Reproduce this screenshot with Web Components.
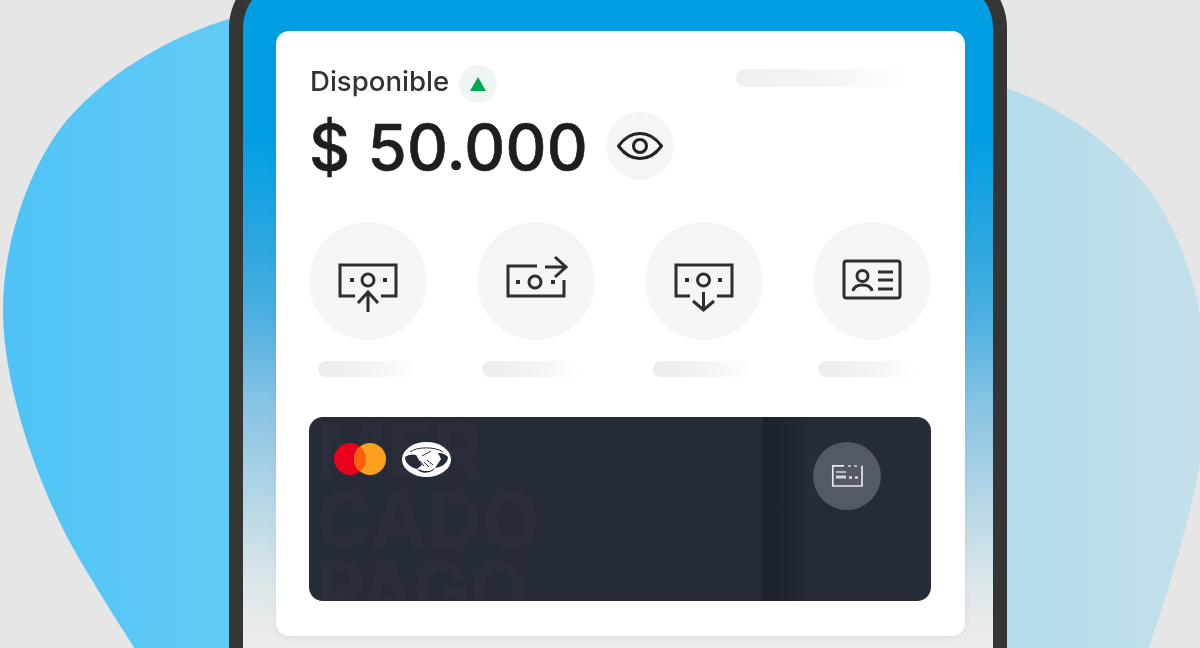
<!DOCTYPE html>
<html><head><meta charset="utf-8"><style>html,body{margin:0;padding:0}body{width:1200px;height:648px;overflow:hidden;background:#e6e6e6}</style></head>
<body>
<wallet-scene>
  <phone-frame>
    <wallet-card>
      <balance-head slot="head" label="Disponible" amount="$ 50.000"></balance-head>
      <action-row slot="actions">
        <action-item kind="up" style="--o:9px"></action-item>
        <action-item kind="send" style="--o:5px"></action-item>
        <action-item kind="down" style="--o:8px"></action-item>
        <action-item kind="id" style="--o:5px"></action-item>
      </action-row>
      <debit-card slot="card"></debit-card>
    </wallet-card>
  </phone-frame>
</wallet-scene>
<script>
function def(name, html, init){
  customElements.define(name, class extends HTMLElement{
    constructor(){super();this.attachShadow({mode:'open'}).innerHTML=html;}
    connectedCallback(){if(init)init(this,this.shadowRoot);}
  });
}
def('wallet-scene',`<style>
:host{display:block;position:relative;width:1200px;height:648px;overflow:hidden;background:#e6e6e6;font-family:Inter,"Open Sans",sans-serif}
svg{position:absolute;left:0;top:0}
.stage{position:relative;display:flex;padding-left:229px;filter:blur(.5px)}
</style>
<svg width="1200" height="648" viewBox="0 0 1200 648"><defs>
<linearGradient id="a" x1="0" x2="1" y1="0" y2="0"><stop offset="0" stop-color="#4fc3f6"/><stop offset="1" stop-color="#63ccf5"/></linearGradient>
<linearGradient id="b" x1="0" x2="1" y1="0" y2="0"><stop offset="0" stop-color="#b2dcec"/><stop offset="1" stop-color="#c4e0ea"/></linearGradient></defs>
<path fill="url(#a)" d="M240 16C185 30 115 65 67 120C30 165 3 240 3 310C3 370 25 455 67 537C85 570 110 610 142 660H240Z"/>
<path fill="url(#b)" d="M1000 86C1060 105 1115 145 1150 191C1185 240 1207 310 1207 390C1207 470 1175 570 1145 660H1000Z"/>
</svg>
<div class="stage"><slot></slot></div>`);
def('phone-frame',`<style>
:host{display:block;flex:none;width:778px;height:720px;margin-top:-34px;box-sizing:border-box;border:14px solid #353535;border-bottom:0;border-radius:62px 62px 0 0;
background:linear-gradient(180deg,#009ee3 0,#009ee3 150px,#2ea7df 270px,#4fb0e0 340px,#85c3e4 420px,#b5d6e6 520px,#dbe6ea 600px,#ececec 660px);padding:51px 28px 0 33px}
</style><slot></slot>`);
def('wallet-card',`<style>
:host{display:flex;flex-direction:column;width:689px;height:605px;box-sizing:border-box;background:#fff;border-radius:13px;padding:31px 34px 35px 33px;box-shadow:0 3px 8px rgba(0,0,0,.05)}
::slotted([slot=actions]){margin-top:42px}
::slotted([slot=card]){margin-top:auto}
</style><slot name="head"></slot><slot name="actions"></slot><slot name="card"></slot>`);
def('balance-head',`<style>
:host{display:flex;flex-direction:column;position:relative;color:#222}
.top{display:flex;align-items:center;gap:10px;height:44px}
.label{font-size:27.6px;font-weight:500;color:#333;position:relative;top:-3px;left:1px}
.badge{width:38px;height:38px;border-radius:50%;background:#eff6f1;display:flex;align-items:center;justify-content:center;margin-left:1px}
.sk{position:absolute;left:427px;top:7px;width:175px;height:18px;border-radius:9px;background:linear-gradient(90deg,#f0f0f0,#f4f4f4 50%,#fff)}
.row{display:flex;align-items:center;gap:18px;height:68px;margin-top:6px}
.amt{font-size:63.5px;font-weight:500;letter-spacing:.25px;color:#1e1e1e;white-space:nowrap;-webkit-text-stroke:.6px #1e1e1e}
.eye{width:68px;height:68px;border-radius:50%;background:#f5f5f5;display:flex;align-items:center;justify-content:center}
</style>
<div class="top"><span class="label"></span><span class="badge"><svg width="16" height="14" viewBox="0 0 16 14"><path d="M8 0L16 14H0Z" fill="#00a650"/></svg></span></div>
<div class="sk"></div>
<div class="row"><span class="amt"></span><span class="eye"><svg width="46" height="30" viewBox="0 0 46 30" fill="none" stroke="#222" stroke-width="3"><path d="M1.5 15C8 6 15 2.5 23 2.500S38 6 44.500 15C38 24 31 27.500 23 27.500S8 24 1.500 15Z"/><circle cx="23" cy="15" r="6.5"/></svg></span></div>`,
(el,s)=>{s.querySelector('.label').textContent=el.getAttribute('label');s.querySelector('.amt').textContent=el.getAttribute('amount');});
def('action-row',`<style>:host{display:flex;justify-content:space-between}</style><slot></slot>`);
const w=`width="64" height="64" viewBox="0 0 64 64"`, g=`fill="none" stroke="#2e2e2e" stroke-width="3"`;
const dot=(x,y)=>`<rect x="${x-2}" y="${y-2}" width="4" height="4" fill="#2e2e2e"/>`;
const icons={
up:`<svg ${w}><g ${g}><path d="M19 47H4V16H60V47H45"/><circle cx="32" cy="31" r="6"/><path d="M32 63V43M22 54L32 43L42 54"/></g>${dot(16,31)}${dot(49,31)}</svg>`,
send:`<svg ${w}><g ${g}><path d="M33 17H4V47H60V31"/><circle cx="31" cy="33" r="6"/><path d="M41 18H61M51 8L62 18L51 28"/></g>${dot(14,33)}${dot(49,33)}</svg>`,
down:`<svg ${w}><g ${g}><path d="M18 47H4V16H60V47H45"/><circle cx="31.5" cy="31" r="6"/><path d="M31.5 43V61M21 52L31.5 61L42 52"/></g>${dot(15,31)}${dot(48,31)}</svg>`,
id:`<svg ${w}><rect x="4" y="12" width="56" height="37" rx="2.5" ${g}/><g ${g}><circle cx="22.5" cy="27" r="5.5"/><path d="M13 42C14 37 18 36 22.5 36S31 37 32 42"/><path d="M38 23H53M38 31H53M38 40H53" stroke-width="3"/></g></svg>`};
def('action-item',`<style>
:host{display:flex;flex-direction:column;width:118px}
.c{width:118px;height:118px;border-radius:50%;background:#f5f5f5;display:flex;align-items:center;justify-content:center}
.l{width:100px;height:16px;border-radius:8px;margin:21px 0 0 var(--o,9px);background:linear-gradient(90deg,#ececec,#f3f3f3 50%,#fff)}
</style><div class="c"></div><div class="l"></div>`,
(el,s)=>{s.querySelector('.c').innerHTML=icons[el.getAttribute('kind')];});
def('debit-card',`<style>
:host{display:block;position:relative;height:184px;border-radius:14px;overflow:hidden;background:#252b37}
.band{position:absolute;left:454px;top:0;bottom:0;width:46px;background:linear-gradient(90deg,#1b222b,#1e252e 40%,#252b37)}
.wm{position:absolute;left:7px;top:-3px;width:240px;font:700 76px/70px Inter,sans-serif;color:#292e3a}
.content{position:relative;display:flex;justify-content:space-between;padding:25px 50px 0 25px}
.logos{display:flex;align-items:center;gap:16px;height:34px}
.chip{width:68px;height:68px;border-radius:50%;background:#545a63;display:flex;align-items:center;justify-content:center}
</style>
<div class="band"></div>
<div class="wm" aria-hidden="true">MER CADO PAGO</div>
<div class="content"><div class="logos">
<svg width="52" height="32" viewBox="0 0 52 32"><circle cx="16" cy="16" r="16" fill="#e8001c"/><circle cx="36" cy="16" r="16" fill="#fca020"/><path d="M26 3.5A16 16 0 0 1 26 28.5A16 16 0 0 1 26 3.5Z" fill="#f4600c"/></svg>
<svg width="49" height="35" viewBox="0 0 49 35"><ellipse cx="24.5" cy="17.5" rx="24.5" ry="17.5" fill="#fff"/><g fill="#252b37"><path d="M3 15C7 12 11 12 14 13L20 23L15 27C8 25 3 21 3 15Z"/><path d="M46 15C42 11 39 11 36 11L39 17L33 26C40 25 46 21 46 15Z"/><path d="M15 27L22 29L28 29L33 26C30 32 18 32 15 27Z"/></g><path d="M8 10C14 4.500 34 4.500 41 10" stroke="#252b37" stroke-width="1" fill="none"/><path d="M20 14L29 9M25 18L31 23M22 20L27 25M18 19L22 24" stroke="#252b37" stroke-width="1" fill="none"/></svg>
</div><div class="chip"><svg width="32" height="24" viewBox="0 0 32 24" fill="none"><path d="M13 1.8H1.8V22H31V1.8" stroke="#e8e8e8" stroke-width="1.7"/><path d="M17 2H20M23 2H26" stroke="#d8d8d8" stroke-width="1.7"/><path d="M5 8H15" stroke="#d8d8d8" stroke-width="1.4"/><path d="M5 13H15" stroke="#d8d8d8" stroke-width="3"/><path d="M18 13.500H21M24 13.500H27" stroke="#d8d8d8" stroke-width="2.4"/></svg></div></div>`);
</script></body></html>
